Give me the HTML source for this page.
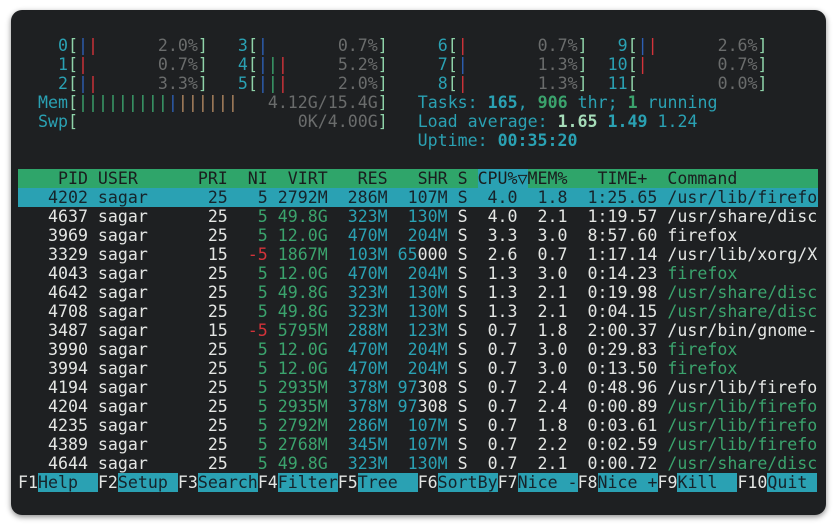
<!DOCTYPE html>
<html><head><meta charset="utf-8"><style>
html,body{margin:0;padding:0;width:837px;height:527px;background:#fff;overflow:hidden}
.win{position:absolute;left:11px;top:10px;width:815px;height:505px;background:#1e2022;border-radius:11px;box-shadow:0 2px 6px rgba(0,0,0,.45)}
.l{position:absolute;left:18px;height:19px;line-height:19px;font-family:"DejaVu Sans Mono","Liberation Mono",monospace;font-size:16.6px;white-space:pre;color:#e4e6e4;width:800px}
.c{color:#2aa1b3}.g{color:#3ba36d}.r{color:#d3333a}.b{color:#2d5fb4}.o{color:#b08660}.d{color:#6a6c6c}.k{color:#8fd3a9}
.B{font-weight:bold}.lg{color:#a6dcb9}
.hd{background:#2fa56a;color:#1a1d1e}.hc{background:#2aa1b3}
.sel{background:#2aa1b3;color:#16242b}
.f{background:#2aa1b3;color:#16242b}
</style></head><body>
<div class="win"></div>
<div class="l" style="top:36px">    <span class="c">0</span><span class="k">[</span><span class="b">|</span><span class="r">|</span>      <span class="d">2.0%</span><span class="k">]</span>   <span class="c">3</span><span class="k">[</span><span class="b">|</span>       <span class="d">0.7%</span><span class="k">]</span>     <span class="c">6</span><span class="k">[</span><span class="r">|</span>       <span class="d">0.7%</span><span class="k">]</span>   <span class="c">9</span><span class="k">[</span><span class="b">|</span><span class="r">|</span>      <span class="d">2.6%</span><span class="k">]</span></div>
<div class="l" style="top:55px">    <span class="c">1</span><span class="k">[</span><span class="r">|</span>       <span class="d">0.7%</span><span class="k">]</span>   <span class="c">4</span><span class="k">[</span><span class="b">|</span><span class="g">|</span><span class="r">|</span>     <span class="d">5.2%</span><span class="k">]</span>     <span class="c">7</span><span class="k">[</span><span class="b">|</span>       <span class="d">1.3%</span><span class="k">]</span>  <span class="c">10</span><span class="k">[</span><span class="r">|</span>       <span class="d">0.7%</span><span class="k">]</span></div>
<div class="l" style="top:74px">    <span class="c">2</span><span class="k">[</span><span class="b">|</span><span class="r">|</span>      <span class="d">3.3%</span><span class="k">]</span>   <span class="c">5</span><span class="k">[</span><span class="b">|</span><span class="g">|</span><span class="r">|</span>     <span class="d">2.0%</span><span class="k">]</span>     <span class="c">8</span><span class="k">[</span><span class="r">|</span>       <span class="d">1.3%</span><span class="k">]</span>  <span class="c">11</span><span class="k">[</span>        <span class="d">0.0%</span><span class="k">]</span></div>
<div class="l" style="top:93px">  <span class="c">Mem</span><span class="k">[</span><span class="g">|||||||||</span><span class="b">|</span><span class="o">||||||</span>   <span class="d">4.12G/15.4G</span><span class="k">]</span>   <span class="c">Tasks: <span class="B">165</span>, </span><span class="g B">906</span><span class="c"> thr; </span><span class="g B">1</span><span class="c"> running</span></div>
<div class="l" style="top:112px">  <span class="c">Swp</span><span class="k">[</span>                      <span class="d">0K/4.00G</span><span class="k">]</span>   <span class="c">Load average: </span><span class="lg B">1.65</span> <span class="c B">1.49</span> <span class="c">1.24</span></div>
<div class="l" style="top:131px">                                        <span class="c">Uptime: <span class="B">00:35:20</span></span></div>
<div class="l hd" style="top:169px">    PID USER      PRI  NI  VIRT   RES   SHR S <span class="hc">CPU%▽</span>MEM%   TIME+  Command</div>
<div class="l sel" style="top:188px">   4202 sagar      25   5 2792M  286M  107M S  4.0  1.8  1:25.65 /usr/lib/firefo</div>
<div class="l" style="top:207px">   4637 sagar      25   <span class="g">5 49.8G</span>  <span class="c">323M  130M</span> S  4.0  2.1  1:19.57 /usr/share/disc</div>
<div class="l" style="top:226px">   3969 sagar      25   <span class="g">5 12.0G</span>  <span class="c">470M  204M</span> S  3.3  3.0  8:57.60 firefox</div>
<div class="l" style="top:245px">   3329 sagar      15  <span class="r">-5</span> <span class="g">1867M</span>  <span class="c">103M 65</span>000 S  2.6  0.7  1:17.14 /usr/lib/xorg/X</div>
<div class="l" style="top:264px">   4043 sagar      25   <span class="g">5 12.0G</span>  <span class="c">470M  204M</span> S  1.3  3.0  0:14.23 <span class="g">firefox</span></div>
<div class="l" style="top:283px">   4642 sagar      25   <span class="g">5 49.8G</span>  <span class="c">323M  130M</span> S  1.3  2.1  0:19.98 <span class="g">/usr/share/disc</span></div>
<div class="l" style="top:302px">   4708 sagar      25   <span class="g">5 49.8G</span>  <span class="c">323M  130M</span> S  1.3  2.1  0:04.15 <span class="g">/usr/share/disc</span></div>
<div class="l" style="top:321px">   3487 sagar      15  <span class="r">-5</span> <span class="g">5795M</span>  <span class="c">288M  123M</span> S  0.7  1.8  2:00.37 /usr/bin/gnome-</div>
<div class="l" style="top:340px">   3990 sagar      25   <span class="g">5 12.0G</span>  <span class="c">470M  204M</span> S  0.7  3.0  0:29.83 <span class="g">firefox</span></div>
<div class="l" style="top:359px">   3994 sagar      25   <span class="g">5 12.0G</span>  <span class="c">470M  204M</span> S  0.7  3.0  0:13.50 <span class="g">firefox</span></div>
<div class="l" style="top:378px">   4194 sagar      25   <span class="g">5 2935M</span>  <span class="c">378M 97</span>308 S  0.7  2.4  0:48.96 /usr/lib/firefo</div>
<div class="l" style="top:397px">   4204 sagar      25   <span class="g">5 2935M</span>  <span class="c">378M 97</span>308 S  0.7  2.4  0:00.89 <span class="g">/usr/lib/firefo</span></div>
<div class="l" style="top:416px">   4235 sagar      25   <span class="g">5 2792M</span>  <span class="c">286M  107M</span> S  0.7  1.8  0:03.61 <span class="g">/usr/lib/firefo</span></div>
<div class="l" style="top:435px">   4389 sagar      25   <span class="g">5 2768M</span>  <span class="c">345M  107M</span> S  0.7  2.2  0:02.59 <span class="g">/usr/lib/firefo</span></div>
<div class="l" style="top:454px">   4644 sagar      25   <span class="g">5 49.8G</span>  <span class="c">323M  130M</span> S  0.7  2.1  0:00.72 <span class="g">/usr/share/disc</span></div>
<div class="l" style="top:473px">F1<span class="f">Help  </span>F2<span class="f">Setup </span>F3<span class="f">Search</span>F4<span class="f">Filter</span>F5<span class="f">Tree  </span>F6<span class="f">SortBy</span>F7<span class="f">Nice -</span>F8<span class="f">Nice +</span>F9<span class="f">Kill  </span>F10<span class="f">Quit </span></div>
</body></html>
